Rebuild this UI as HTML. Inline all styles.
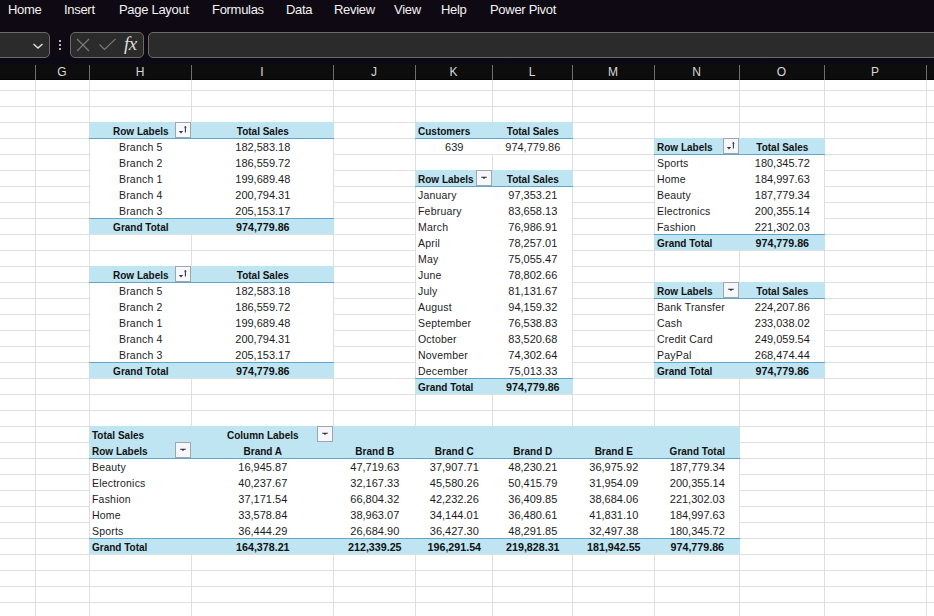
<!DOCTYPE html>
<html><head><meta charset="utf-8"><style>
*{margin:0;padding:0;box-sizing:border-box}
html,body{width:934px;height:616px;overflow:hidden;background:#fff;font-family:"Liberation Sans",sans-serif}
#rib{position:absolute;left:0;top:0;width:934px;height:64px;background:linear-gradient(#0f0914 0,#0f0913 57px,#0a0915 58px,#0b0a14 64px)}
.mi{position:absolute;top:1px;height:18px;line-height:18px;font-size:13px;letter-spacing:-0.3px;color:#f2f2f2}
.box{position:absolute;top:32px;height:26px;background:#2b2b2b;border:1px solid #6a6a6a;border-radius:5px}
#chr{position:absolute;left:0;top:64px;width:934px;height:16px;background:#0d0d0d;border-bottom:1px solid #050505}
.ch{position:absolute;top:64px;height:16px;line-height:16px;font-size:12px;color:#d8d8d8;text-align:center}
.chs{position:absolute;top:65px;width:1px;height:15px;background:#6e6e6e}
.vl{position:absolute;top:80px;width:1px;height:536px;background:#dfdfdf}
.hl{position:absolute;left:0;width:934px;height:1px;background:#dfdfdf}
.band{position:absolute;background:#bfe4f2}
.wh{position:absolute;background:#fff}
.t{position:absolute;height:16px;line-height:19px;font-size:10.5px;letter-spacing:0.2px;color:#1c1c1c;white-space:nowrap}
.t.n{font-size:11px;letter-spacing:0}
.t.b{font-weight:bold;font-size:10px;letter-spacing:0;color:#111}
.t.b.n{font-size:10.7px}
.dd{position:absolute;width:16px;height:16px;background:#f6f7f9;border:1px solid #a0a6ab;margin-left:0px;margin-top:0px}
.dd svg{position:absolute;left:0;top:0}
</style></head><body>
<div id="rib"></div>
<div class="mi" style="left:8px">Home</div><div class="mi" style="left:64px">Insert</div><div class="mi" style="left:119px">Page Layout</div><div class="mi" style="left:212px">Formulas</div><div class="mi" style="left:286px">Data</div><div class="mi" style="left:334px">Review</div><div class="mi" style="left:394px">View</div><div class="mi" style="left:441px">Help</div><div class="mi" style="left:490px">Power Pivot</div>
<div class="box" style="left:-10px;width:60px"><svg style="position:absolute;left:41.3px;top:9px" width="12" height="8" viewBox="0 0 12 8"><path d="M1.5 2l4.5 4 4.5-4" stroke="#e0e0e0" stroke-width="1.4" fill="none"/></svg></div>
<svg style="position:absolute;left:58px;top:39px" width="4" height="12" viewBox="0 0 4 12"><circle cx="2" cy="2" r="1.1" fill="#ddd"/><circle cx="2" cy="6" r="1.1" fill="#ddd"/><circle cx="2" cy="10" r="1.1" fill="#ddd"/></svg>
<div class="box" style="left:70px;width:74px">
<svg style="position:absolute;left:5.4px;top:5.4px" width="14" height="14" viewBox="0 0 14 14"><path d="M1 1l12 12M13 1L1 13" stroke="#7c7c7c" stroke-width="1.1" fill="none"/></svg>
<svg style="position:absolute;left:27.6px;top:5.4px" width="17" height="13" viewBox="0 0 17 13"><path d="M0.5 6.5l5 5L16.5 0.8" stroke="#7c7c7c" stroke-width="1.1" fill="none"/></svg>
<div style="position:absolute;left:53px;top:0px;font-family:'Liberation Serif',serif;font-style:italic;font-size:19px;color:#dcdcdc;line-height:22px;letter-spacing:-0.5px">fx</div>
</div>
<div class="box" style="left:148px;width:800px"></div>
<div id="chr"></div>
<div class="ch" style="left:35px;width:54px">G</div><div class="ch" style="left:89px;width:102px">H</div><div class="ch" style="left:191px;width:142px">I</div><div class="ch" style="left:333px;width:82px">J</div><div class="ch" style="left:415px;width:77px">K</div><div class="ch" style="left:492px;width:80px">L</div><div class="ch" style="left:572px;width:82px">M</div><div class="ch" style="left:654px;width:85px">N</div><div class="ch" style="left:739px;width:85px">O</div><div class="ch" style="left:824px;width:102px">P</div><div class="chs" style="left:35px"></div><div class="chs" style="left:89px"></div><div class="chs" style="left:191px"></div><div class="chs" style="left:333px"></div><div class="chs" style="left:415px"></div><div class="chs" style="left:492px"></div><div class="chs" style="left:572px"></div><div class="chs" style="left:654px"></div><div class="chs" style="left:739px"></div><div class="chs" style="left:824px"></div><div class="chs" style="left:926px"></div>
<div class="vl" style="left:35px"></div><div class="vl" style="left:89px"></div><div class="vl" style="left:191px"></div><div class="vl" style="left:333px"></div><div class="vl" style="left:415px"></div><div class="vl" style="left:492px"></div><div class="vl" style="left:572px"></div><div class="vl" style="left:654px"></div><div class="vl" style="left:739px"></div><div class="vl" style="left:824px"></div><div class="vl" style="left:926px"></div><div class="hl" style="top:90px"></div><div class="hl" style="top:106px"></div><div class="hl" style="top:122px"></div><div class="hl" style="top:138px"></div><div class="hl" style="top:154px"></div><div class="hl" style="top:170px"></div><div class="hl" style="top:186px"></div><div class="hl" style="top:202px"></div><div class="hl" style="top:218px"></div><div class="hl" style="top:234px"></div><div class="hl" style="top:250px"></div><div class="hl" style="top:266px"></div><div class="hl" style="top:282px"></div><div class="hl" style="top:298px"></div><div class="hl" style="top:314px"></div><div class="hl" style="top:330px"></div><div class="hl" style="top:346px"></div><div class="hl" style="top:362px"></div><div class="hl" style="top:378px"></div><div class="hl" style="top:394px"></div><div class="hl" style="top:410px"></div><div class="hl" style="top:426px"></div><div class="hl" style="top:442px"></div><div class="hl" style="top:458px"></div><div class="hl" style="top:474px"></div><div class="hl" style="top:490px"></div><div class="hl" style="top:506px"></div><div class="hl" style="top:522px"></div><div class="hl" style="top:538px"></div><div class="hl" style="top:554px"></div><div class="hl" style="top:570px"></div><div class="hl" style="top:586px"></div><div class="hl" style="top:602px"></div>
<div class="band" style="left:89px;top:122px;width:245px;height:16px"></div><div style="position:absolute;left:89px;top:138px;width:245px;height:1px;background:#5fa6c9"></div><div class="wh" style="left:90px;top:139px;width:243px;height:79px"></div><div style="position:absolute;left:89px;top:218px;width:245px;height:1px;background:#5fa6c9"></div><div class="band" style="left:89px;top:219px;width:245px;height:15px"></div><div class="t b" style="left:89.8px;width:102px;top:122px;text-align:center">Row Labels</div><div class="dd" style="left:175px;top:122px"><svg width="14" height="14" viewBox="0 0 14 14"><path d="M2.8 8.0h4.4l-2.2 2.5z" fill="#3c3c3c"/><path d="M9.4 3.2v6.2" stroke="#3c3c3c" stroke-width="1.1" fill="none"/><path d="M8 4.6l1.4-1.6 1.4 1.6z" fill="#3c3c3c"/></svg></div><div class="t b" style="left:191.8px;width:142px;top:122px;text-align:center">Total Sales</div><div class="t" style="left:89.8px;width:102px;top:138px;text-align:center">Branch 5</div><div class="t n" style="left:191.8px;width:142px;top:138px;text-align:center">182,583.18</div><div class="t" style="left:89.8px;width:102px;top:154px;text-align:center">Branch 2</div><div class="t n" style="left:191.8px;width:142px;top:154px;text-align:center">186,559.72</div><div class="t" style="left:89.8px;width:102px;top:170px;text-align:center">Branch 1</div><div class="t n" style="left:191.8px;width:142px;top:170px;text-align:center">199,689.48</div><div class="t" style="left:89.8px;width:102px;top:186px;text-align:center">Branch 4</div><div class="t n" style="left:191.8px;width:142px;top:186px;text-align:center">200,794.31</div><div class="t" style="left:89.8px;width:102px;top:202px;text-align:center">Branch 3</div><div class="t n" style="left:191.8px;width:142px;top:202px;text-align:center">205,153.17</div><div class="t b" style="left:89.8px;width:102px;top:218px;text-align:center">Grand Total</div><div class="t b n" style="left:191.8px;width:142px;top:218px;text-align:center">974,779.86</div><div class="band" style="left:89px;top:266px;width:245px;height:16px"></div><div style="position:absolute;left:89px;top:282px;width:245px;height:1px;background:#5fa6c9"></div><div class="wh" style="left:90px;top:283px;width:243px;height:79px"></div><div style="position:absolute;left:89px;top:362px;width:245px;height:1px;background:#5fa6c9"></div><div class="band" style="left:89px;top:363px;width:245px;height:15px"></div><div class="t b" style="left:89.8px;width:102px;top:266px;text-align:center">Row Labels</div><div class="dd" style="left:175px;top:266px"><svg width="14" height="14" viewBox="0 0 14 14"><path d="M2.8 8.0h4.4l-2.2 2.5z" fill="#3c3c3c"/><path d="M9.4 3.2v6.2" stroke="#3c3c3c" stroke-width="1.1" fill="none"/><path d="M8 4.6l1.4-1.6 1.4 1.6z" fill="#3c3c3c"/></svg></div><div class="t b" style="left:191.8px;width:142px;top:266px;text-align:center">Total Sales</div><div class="t" style="left:89.8px;width:102px;top:282px;text-align:center">Branch 5</div><div class="t n" style="left:191.8px;width:142px;top:282px;text-align:center">182,583.18</div><div class="t" style="left:89.8px;width:102px;top:298px;text-align:center">Branch 2</div><div class="t n" style="left:191.8px;width:142px;top:298px;text-align:center">186,559.72</div><div class="t" style="left:89.8px;width:102px;top:314px;text-align:center">Branch 1</div><div class="t n" style="left:191.8px;width:142px;top:314px;text-align:center">199,689.48</div><div class="t" style="left:89.8px;width:102px;top:330px;text-align:center">Branch 4</div><div class="t n" style="left:191.8px;width:142px;top:330px;text-align:center">200,794.31</div><div class="t" style="left:89.8px;width:102px;top:346px;text-align:center">Branch 3</div><div class="t n" style="left:191.8px;width:142px;top:346px;text-align:center">205,153.17</div><div class="t b" style="left:89.8px;width:102px;top:362px;text-align:center">Grand Total</div><div class="t b n" style="left:191.8px;width:142px;top:362px;text-align:center">974,779.86</div><div class="band" style="left:415px;top:122px;width:158px;height:16px"></div><div style="position:absolute;left:415px;top:138px;width:158px;height:1px;background:#5fa6c9"></div><div class="wh" style="left:416px;top:139px;width:156px;height:15px"></div><div class="t b" style="left:418px;top:122px">Customers</div><div class="t b" style="left:492.8px;width:80px;top:122px;text-align:center">Total Sales</div><div class="t n" style="left:415.8px;width:77px;top:138px;text-align:center">639</div><div class="t n" style="left:492.8px;width:80px;top:138px;text-align:center">974,779.86</div><div class="band" style="left:415px;top:170px;width:158px;height:16px"></div><div style="position:absolute;left:415px;top:186px;width:158px;height:1px;background:#5fa6c9"></div><div class="wh" style="left:416px;top:187px;width:156px;height:191px"></div><div style="position:absolute;left:415px;top:378px;width:158px;height:1px;background:#5fa6c9"></div><div class="band" style="left:415px;top:379px;width:158px;height:15px"></div><div class="t b" style="left:418px;top:170px">Row Labels</div><div class="dd" style="left:476px;top:170px"><svg width="14" height="14" viewBox="0 0 14 14"><path d="M4.2 5.7h5.6v1.1h-1.4l-1.4 1.3-1.4-1.3h-1.4z" fill="#333"/></svg></div><div class="t b" style="left:492.8px;width:80px;top:170px;text-align:center">Total Sales</div><div class="t" style="left:418px;top:186px">January</div><div class="t n" style="left:492.8px;width:80px;top:186px;text-align:center">97,353.21</div><div class="t" style="left:418px;top:202px">February</div><div class="t n" style="left:492.8px;width:80px;top:202px;text-align:center">83,658.13</div><div class="t" style="left:418px;top:218px">March</div><div class="t n" style="left:492.8px;width:80px;top:218px;text-align:center">76,986.91</div><div class="t" style="left:418px;top:234px">April</div><div class="t n" style="left:492.8px;width:80px;top:234px;text-align:center">78,257.01</div><div class="t" style="left:418px;top:250px">May</div><div class="t n" style="left:492.8px;width:80px;top:250px;text-align:center">75,055.47</div><div class="t" style="left:418px;top:266px">June</div><div class="t n" style="left:492.8px;width:80px;top:266px;text-align:center">78,802.66</div><div class="t" style="left:418px;top:282px">July</div><div class="t n" style="left:492.8px;width:80px;top:282px;text-align:center">81,131.67</div><div class="t" style="left:418px;top:298px">August</div><div class="t n" style="left:492.8px;width:80px;top:298px;text-align:center">94,159.32</div><div class="t" style="left:418px;top:314px">September</div><div class="t n" style="left:492.8px;width:80px;top:314px;text-align:center">76,538.83</div><div class="t" style="left:418px;top:330px">October</div><div class="t n" style="left:492.8px;width:80px;top:330px;text-align:center">83,520.68</div><div class="t" style="left:418px;top:346px">November</div><div class="t n" style="left:492.8px;width:80px;top:346px;text-align:center">74,302.64</div><div class="t" style="left:418px;top:362px">December</div><div class="t n" style="left:492.8px;width:80px;top:362px;text-align:center">75,013.33</div><div class="t b" style="left:418px;top:378px">Grand Total</div><div class="t b n" style="left:492.8px;width:80px;top:378px;text-align:center">974,779.86</div><div class="band" style="left:654px;top:138px;width:171px;height:16px"></div><div style="position:absolute;left:654px;top:154px;width:171px;height:1px;background:#5fa6c9"></div><div class="wh" style="left:655px;top:155px;width:169px;height:79px"></div><div style="position:absolute;left:654px;top:234px;width:171px;height:1px;background:#5fa6c9"></div><div class="band" style="left:654px;top:235px;width:171px;height:15px"></div><div class="t b" style="left:657px;top:138px">Row Labels</div><div class="dd" style="left:723px;top:138px"><svg width="14" height="14" viewBox="0 0 14 14"><path d="M2.8 8.0h4.4l-2.2 2.5z" fill="#3c3c3c"/><path d="M9.4 3.2v6.2" stroke="#3c3c3c" stroke-width="1.1" fill="none"/><path d="M8 4.6l1.4-1.6 1.4 1.6z" fill="#3c3c3c"/></svg></div><div class="t b" style="left:739.8px;width:85px;top:138px;text-align:center">Total Sales</div><div class="t" style="left:657px;top:154px">Sports</div><div class="t n" style="left:739.8px;width:85px;top:154px;text-align:center">180,345.72</div><div class="t" style="left:657px;top:170px">Home</div><div class="t n" style="left:739.8px;width:85px;top:170px;text-align:center">184,997.63</div><div class="t" style="left:657px;top:186px">Beauty</div><div class="t n" style="left:739.8px;width:85px;top:186px;text-align:center">187,779.34</div><div class="t" style="left:657px;top:202px">Electronics</div><div class="t n" style="left:739.8px;width:85px;top:202px;text-align:center">200,355.14</div><div class="t" style="left:657px;top:218px">Fashion</div><div class="t n" style="left:739.8px;width:85px;top:218px;text-align:center">221,302.03</div><div class="t b" style="left:657px;top:234px">Grand Total</div><div class="t b n" style="left:739.8px;width:85px;top:234px;text-align:center">974,779.86</div><div class="band" style="left:654px;top:282px;width:171px;height:16px"></div><div style="position:absolute;left:654px;top:298px;width:171px;height:1px;background:#5fa6c9"></div><div class="wh" style="left:655px;top:299px;width:169px;height:63px"></div><div style="position:absolute;left:654px;top:362px;width:171px;height:1px;background:#5fa6c9"></div><div class="band" style="left:654px;top:363px;width:171px;height:15px"></div><div class="t b" style="left:657px;top:282px">Row Labels</div><div class="dd" style="left:723px;top:282px"><svg width="14" height="14" viewBox="0 0 14 14"><path d="M4.2 5.7h5.6v1.1h-1.4l-1.4 1.3-1.4-1.3h-1.4z" fill="#333"/></svg></div><div class="t b" style="left:739.8px;width:85px;top:282px;text-align:center">Total Sales</div><div class="t" style="left:657px;top:298px">Bank Transfer</div><div class="t n" style="left:739.8px;width:85px;top:298px;text-align:center">224,207.86</div><div class="t" style="left:657px;top:314px">Cash</div><div class="t n" style="left:739.8px;width:85px;top:314px;text-align:center">233,038.02</div><div class="t" style="left:657px;top:330px">Credit Card</div><div class="t n" style="left:739.8px;width:85px;top:330px;text-align:center">249,059.54</div><div class="t" style="left:657px;top:346px">PayPal</div><div class="t n" style="left:739.8px;width:85px;top:346px;text-align:center">268,474.44</div><div class="t b" style="left:657px;top:362px">Grand Total</div><div class="t b n" style="left:739.8px;width:85px;top:362px;text-align:center">974,779.86</div><div class="band" style="left:89px;top:426px;width:651px;height:32px"></div><div style="position:absolute;left:89px;top:458px;width:651px;height:1px;background:#5fa6c9"></div><div class="wh" style="left:90px;top:459px;width:649px;height:79px"></div><div style="position:absolute;left:89px;top:538px;width:651px;height:1px;background:#5fa6c9"></div><div class="band" style="left:89px;top:539px;width:651px;height:15px"></div><div class="t b" style="left:92px;top:426px">Total Sales</div><div class="t b" style="left:191.8px;width:142px;top:426px;text-align:center">Column Labels</div><div class="dd" style="left:317px;top:426px"><svg width="14" height="14" viewBox="0 0 14 14"><path d="M4.2 5.7h5.6v1.1h-1.4l-1.4 1.3-1.4-1.3h-1.4z" fill="#333"/></svg></div><div class="t b" style="left:92px;top:442px">Row Labels</div><div class="dd" style="left:175px;top:442px"><svg width="14" height="14" viewBox="0 0 14 14"><path d="M4.2 5.7h5.6v1.1h-1.4l-1.4 1.3-1.4-1.3h-1.4z" fill="#333"/></svg></div><div class="t b" style="left:191.8px;width:142px;top:442px;text-align:center">Brand A</div><div class="t b" style="left:333.8px;width:82px;top:442px;text-align:center">Brand B</div><div class="t b" style="left:415.8px;width:77px;top:442px;text-align:center">Brand C</div><div class="t b" style="left:492.8px;width:80px;top:442px;text-align:center">Brand D</div><div class="t b" style="left:572.8px;width:82px;top:442px;text-align:center">Brand E</div><div class="t b" style="left:654.8px;width:85px;top:442px;text-align:center">Grand Total</div><div class="t" style="left:92px;top:458px">Beauty</div><div class="t n" style="left:191.8px;width:142px;top:458px;text-align:center">16,945.87</div><div class="t n" style="left:333.8px;width:82px;top:458px;text-align:center">47,719.63</div><div class="t n" style="left:415.8px;width:77px;top:458px;text-align:center">37,907.71</div><div class="t n" style="left:492.8px;width:80px;top:458px;text-align:center">48,230.21</div><div class="t n" style="left:572.8px;width:82px;top:458px;text-align:center">36,975.92</div><div class="t n" style="left:654.8px;width:85px;top:458px;text-align:center">187,779.34</div><div class="t" style="left:92px;top:474px">Electronics</div><div class="t n" style="left:191.8px;width:142px;top:474px;text-align:center">40,237.67</div><div class="t n" style="left:333.8px;width:82px;top:474px;text-align:center">32,167.33</div><div class="t n" style="left:415.8px;width:77px;top:474px;text-align:center">45,580.26</div><div class="t n" style="left:492.8px;width:80px;top:474px;text-align:center">50,415.79</div><div class="t n" style="left:572.8px;width:82px;top:474px;text-align:center">31,954.09</div><div class="t n" style="left:654.8px;width:85px;top:474px;text-align:center">200,355.14</div><div class="t" style="left:92px;top:490px">Fashion</div><div class="t n" style="left:191.8px;width:142px;top:490px;text-align:center">37,171.54</div><div class="t n" style="left:333.8px;width:82px;top:490px;text-align:center">66,804.32</div><div class="t n" style="left:415.8px;width:77px;top:490px;text-align:center">42,232.26</div><div class="t n" style="left:492.8px;width:80px;top:490px;text-align:center">36,409.85</div><div class="t n" style="left:572.8px;width:82px;top:490px;text-align:center">38,684.06</div><div class="t n" style="left:654.8px;width:85px;top:490px;text-align:center">221,302.03</div><div class="t" style="left:92px;top:506px">Home</div><div class="t n" style="left:191.8px;width:142px;top:506px;text-align:center">33,578.84</div><div class="t n" style="left:333.8px;width:82px;top:506px;text-align:center">38,963.07</div><div class="t n" style="left:415.8px;width:77px;top:506px;text-align:center">34,144.01</div><div class="t n" style="left:492.8px;width:80px;top:506px;text-align:center">36,480.61</div><div class="t n" style="left:572.8px;width:82px;top:506px;text-align:center">41,831.10</div><div class="t n" style="left:654.8px;width:85px;top:506px;text-align:center">184,997.63</div><div class="t" style="left:92px;top:522px">Sports</div><div class="t n" style="left:191.8px;width:142px;top:522px;text-align:center">36,444.29</div><div class="t n" style="left:333.8px;width:82px;top:522px;text-align:center">26,684.90</div><div class="t n" style="left:415.8px;width:77px;top:522px;text-align:center">36,427.30</div><div class="t n" style="left:492.8px;width:80px;top:522px;text-align:center">48,291.85</div><div class="t n" style="left:572.8px;width:82px;top:522px;text-align:center">32,497.38</div><div class="t n" style="left:654.8px;width:85px;top:522px;text-align:center">180,345.72</div><div class="t b" style="left:92px;top:538px">Grand Total</div><div class="t b n" style="left:191.8px;width:142px;top:538px;text-align:center">164,378.21</div><div class="t b n" style="left:333.8px;width:82px;top:538px;text-align:center">212,339.25</div><div class="t b n" style="left:415.8px;width:77px;top:538px;text-align:center">196,291.54</div><div class="t b n" style="left:492.8px;width:80px;top:538px;text-align:center">219,828.31</div><div class="t b n" style="left:572.8px;width:82px;top:538px;text-align:center">181,942.55</div><div class="t b n" style="left:654.8px;width:85px;top:538px;text-align:center">974,779.86</div>
</body></html>
